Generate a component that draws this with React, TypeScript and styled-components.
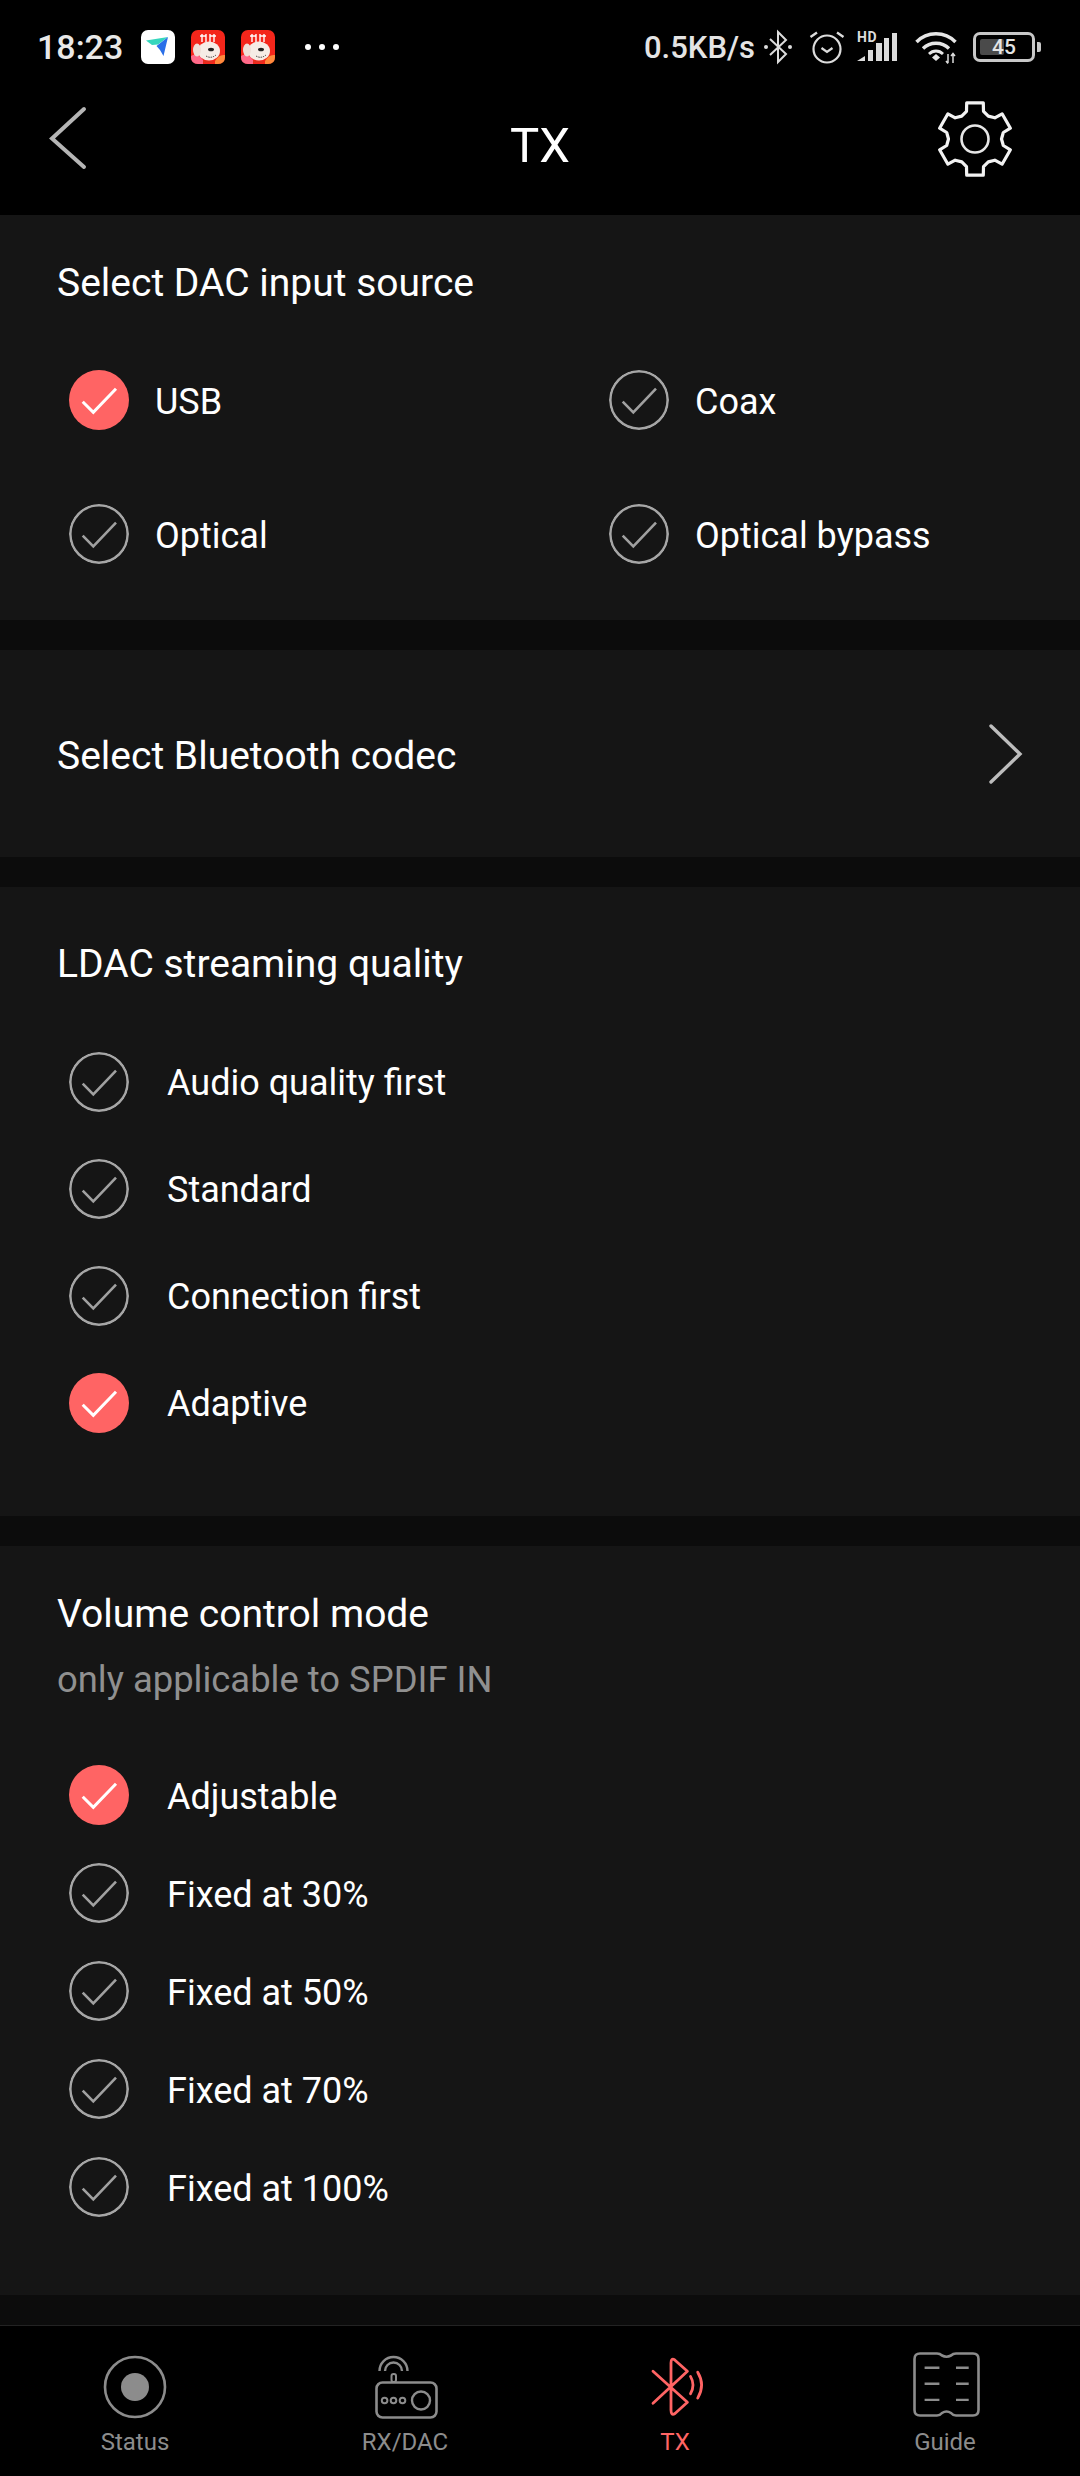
import React from "react";
import styled, { createGlobalStyle } from "styled-components";

const GlobalStyle = createGlobalStyle`
  html, body {
    margin: 0;
    padding: 0;
    background: #000;
  }
  * {
    box-sizing: border-box;
  }
`;

const ACCENT = "#ff6464";

function gearPath(cx: number, cy: number) {
  const rOut = 37;
  const rIn = 26.5;
  const pts: string[] = [];
  for (let i = 0; i < 6; i++) {
    const a = -90 + i * 60;
    const pt = (deg: number, r: number) => {
      const rad = (deg * Math.PI) / 180;
      return `${(cx + r * Math.cos(rad)).toFixed(1)} ${(cy + r * Math.sin(rad)).toFixed(1)}`;
    };
    pts.push(pt(a - 17, rOut - 8), pt(a - 13, rOut), pt(a + 13, rOut), pt(a + 17, rOut - 8), pt(a + 30, rIn));
  }
  return `M${pts.join("L")}Z`;
}

function PlaneApp() {
  return (
    <AppIcon viewBox="0 0 34 34">
      <rect width="34" height="34" rx="7" fill="#fff" />
      <path d="M5 10.5 27 7 17 14.5 11 15Z" fill="#35d6bd" />
      <path d="M27 7 22.5 26 19 20 15.5 16Z" fill="#2a6fe8" />
    </AppIcon>
  );
}

function DogApp() {
  return (
    <AppIcon viewBox="0 0 34 34">
      <rect width="34" height="34" rx="7" fill="#f4261b" />
      <path d="M0 26 Q6 22 12 30 L12 34 H7 Q0 34 0 27Z" fill="#ff6a8a" />
      <path d="M34 25 Q28 24 24 31 L24 34 H27 Q34 34 34 27Z" fill="#ff8a3c" />
      <path d="M11 4v8M15 4v8M19 4v8M23 4v8M9 6h6M19 6h6" stroke="#fff" strokeWidth="1.4" />
      <ellipse cx="18" cy="21" rx="11" ry="9.5" fill="#f6ece6" />
      <ellipse cx="6" cy="20" rx="4" ry="6.5" fill="#efe0d8" />
      <ellipse cx="20" cy="19.5" rx="3" ry="1.8" fill="#222" />
      <path d="M15 26q5 3 10-1" stroke="#333" strokeWidth="1" strokeDasharray="1.4 1" fill="none" />
      <rect x="12" y="31" width="10" height="1.4" fill="#d32" />
    </AppIcon>
  );
}

function Check({ selected }: { selected: boolean }) {
  return (
    <RadioCircle $selected={selected} viewBox="0 0 60 60">
      {!selected && <circle cx="30" cy="30" r="28.7" fill="none" stroke="#a6a6a6" strokeWidth="2.6" />}
      <path
        d="M13.7 31.7 24.3 42.3 47 18.7"
        fill="none"
        stroke={selected ? "#fff" : "#a0a0a0"}
        strokeWidth={selected ? 3 : 2.6}
      />
    </RadioCircle>
  );
}

function Option({ label, selected = false, wide = false }: { label: string; selected?: boolean; wide?: boolean }) {
  return (
    <OptionInner $wide={wide}>
      <Check selected={selected} />
      <OptionLabel>{label}</OptionLabel>
    </OptionInner>
  );
}

export default function App() {
  return (
    <Page>
      <GlobalStyle />
      <Top>
        <StatusBar>
          <StatusLeft>
            <Clock>18:23</Clock>
            <AppIcons>
              <PlaneApp />
              <DogApp />
              <DogApp />
            </AppIcons>
            <Dots>
              <i />
              <i />
              <i />
            </Dots>
          </StatusLeft>
          <StatusRight>
            <Speed>0.5KB/s</Speed>
            <StatusIcon $w={30} $gap={8} viewBox="0 0 30 34">
              <path d="M7 9 23 24 15 32V2L23 10 7 25" fill="none" stroke="#dcdcdc" strokeWidth="2" />
              <circle cx="3" cy="17" r="2" fill="#dcdcdc" />
              <circle cx="27" cy="17" r="2" fill="#dcdcdc" />
            </StatusIcon>
            <StatusIcon $w={36} $gap={16} viewBox="0 0 36 34">
              <circle cx="18" cy="19" r="13.5" fill="none" stroke="#dcdcdc" strokeWidth="2.2" />
              <path d="M12.5 18 18 22 23.5 18" fill="none" stroke="#dcdcdc" strokeWidth="2.2" />
              <path d="M1.5 7 8 2.5M34.5 7 28 2.5" stroke="#dcdcdc" strokeWidth="2.4" />
            </StatusIcon>
            <StatusIcon $w={42} $gap={12} viewBox="0 0 42 34">
              <path d="M0 31 8 26V31ZM11 20H16V31H11ZM19 13H25V31H19ZM27 8H32V31H27ZM35 3H40V31H35Z" fill="#dcdcdc" />
              <HdText x="0" y="12">HD</HdText>
            </StatusIcon>
            <StatusIcon $w={42} $gap={16} viewBox="0 0 42 34">
              <path d="M1.500 12C12 1 30 1 40.500 12M8 18.500C15 11.500 27 11.500 34 18.500" fill="none" stroke="#e6e6e6" strokeWidth="3.4" />
              <path d="M14 24C18 20 24 20 28 24" fill="none" stroke="#e6e6e6" strokeWidth="2.8" />
              <path d="M17 27.500 21 24 25 27.500 21 31Z" fill="#e6e6e6" />
              <path d="M33 24V33M31 31 33 33.500M38 33V24M36 26 38 23.500 40 26" fill="none" stroke="#dcdcdc" strokeWidth="1.5" />
            </StatusIcon>
            <BatteryWrap>
              <BatteryBody>
                <BatteryFill />
                <BatteryText>45</BatteryText>
              </BatteryBody>
              <BatteryTip />
            </BatteryWrap>
          </StatusRight>
        </StatusBar>
        <Header>
          <HeaderSlot>
            <svg width="44" height="66" viewBox="0 0 44 66">
              <path d="M36 3 4 32.500 36 61" fill="none" stroke="#b5b5b5" strokeWidth="4" strokeLinecap="round" />
            </svg>
          </HeaderSlot>
          <HeaderTitle>TX</HeaderTitle>
          <GearSlot>
            <svg width="80" height="80" viewBox="0 0 80 80">
              <path d={gearPath(40, 40)} fill="none" stroke="#f2f2f2" strokeWidth="3.2" strokeLinejoin="round" />
              <circle cx="40" cy="40" r="13.500" fill="none" stroke="#e6e6e6" strokeWidth="2.6" />
            </svg>
          </GearSlot>
        </Header>
      </Top>

      <Content>
        <SourceCard>
          <Title>Select DAC input source</Title>
          <SourceGrid>
            <Option label="USB" selected />
            <Option label="Coax" />
            <Option label="Optical" />
            <Option label="Optical bypass" />
          </SourceGrid>
        </SourceCard>

        <CodecCard>
          <CodecTitle>Select Bluetooth codec</CodecTitle>
          <svg width="36" height="62" viewBox="0 0 36 62">
            <path d="M3 3 32 31 3 59" fill="none" stroke="#bdbdbd" strokeWidth="3.4" strokeLinecap="round" />
          </svg>
        </CodecCard>

        <QualityCard>
          <Title>LDAC streaming quality</Title>
          <OptionList $rowHeight={107} $top={34}>
            <Option wide label="Audio quality first" />
            <Option wide label="Standard" />
            <Option wide label="Connection first" />
            <Option wide label="Adaptive" selected />
          </OptionList>
        </QualityCard>

        <VolumeCard>
          <Title>Volume control mode</Title>
          <Subtitle>only applicable to SPDIF IN</Subtitle>
          <OptionList $rowHeight={98} $top={36}>
            <Option wide label="Adjustable" selected />
            <Option wide label="Fixed at 30%" />
            <Option wide label="Fixed at 50%" />
            <Option wide label="Fixed at 70%" />
            <Option wide label="Fixed at 100%" />
          </OptionList>
        </VolumeCard>
      </Content>

      <BottomNav>
        <NavItem>
          <NavIcon viewBox="0 0 70 70">
            <circle cx="35" cy="35" r="30" fill="none" stroke="#8c8c8c" strokeWidth="2.6" />
            <circle cx="35" cy="35" r="14" fill="#8c8c8c" />
          </NavIcon>
          <NavLabel>Status</NavLabel>
        </NavItem>
        <NavItem>
          <NavIcon viewBox="0 0 70 70">
            <rect x="6.500" y="30.500" width="60" height="35" rx="6" fill="none" stroke="#8c8c8c" strokeWidth="2.6" />
            <path d="M9.500 19A14 14 0 0 1 37.500 19M15 19A8.500 8.500 0 0 1 32 19" fill="none" stroke="#8c8c8c" strokeWidth="2.4" />
            <rect x="21.500" y="22" width="4.500" height="8" rx="2" fill="none" stroke="#8c8c8c" strokeWidth="2" />
            <circle cx="14.600" cy="48.500" r="2.800" fill="none" stroke="#8c8c8c" strokeWidth="2" />
            <circle cx="23.500" cy="48.500" r="2.800" fill="none" stroke="#8c8c8c" strokeWidth="2" />
            <circle cx="32.500" cy="48.500" r="2.800" fill="none" stroke="#8c8c8c" strokeWidth="2" />
            <circle cx="51" cy="48.500" r="9" fill="none" stroke="#8c8c8c" strokeWidth="2.4" />
          </NavIcon>
          <NavLabel>RX/DAC</NavLabel>
        </NavItem>
        <NavItem>
          <NavIcon viewBox="0 0 70 70">
            <path
              d="M13 19.300 47.400 50.300 35 61.500Q31 64 31 58V11Q31 5 35 8.200L47.400 19.300 13 51.300"
              fill="none"
              stroke={ACCENT}
              strokeWidth="2.800"
              strokeLinecap="round"
              strokeLinejoin="round"
            />
            <path d="M50.500 24.400Q55.500 33 50.500 41.700M57.700 20.300Q65.500 33 57.700 46.100" fill="none" stroke={ACCENT} strokeWidth="2.800" strokeLinecap="round" />
          </NavIcon>
          <NavLabel $active>TX</NavLabel>
        </NavItem>
        <NavItem>
          <NavIcon viewBox="0 0 70 70">
            <path
              d="M10 1.500H27Q30 1.500 32 3.500Q36.500 6 41 3.500Q43 1.500 46 1.500H63Q68.500 1.500 68.500 7V58Q68.500 63.500 63 63.500H46Q43 63.500 41 61Q36.500 58 32 61Q30 63.500 27 63.500H10Q4.500 63.500 4.500 58V7Q4.500 1.500 10 1.500Z"
              fill="none"
              stroke="#8c8c8c"
              strokeWidth="2.600"
            />
            <path d="M14.600 15.800H29.400M46 15.800H58.700M14.600 31.700H29.400M46 31.700H58.700M14.600 47.900H29.400M46 47.900H58.700" stroke="#8c8c8c" strokeWidth="2.400" />
          </NavIcon>
          <NavLabel>Guide</NavLabel>
        </NavItem>
      </BottomNav>
    </Page>
  );
}

const Page = styled.div`
  width: 1080px;
  height: 2476px;
  display: flex;
  flex-direction: column;
  overflow: hidden;
  background: #0c0c0c;
  color: #fff;
  font-family: Roboto, "Liberation Sans", sans-serif;
`;

const Top = styled.div`
  height: 215px;
  background: #000;
  flex: none;
`;

const StatusBar = styled.div`
  height: 94px;
  display: flex;
  align-items: center;
  justify-content: space-between;
  padding: 0 39px 0 37px;
`;

const StatusLeft = styled.div`
  display: flex;
  align-items: center;
`;

const Clock = styled.span`
  font-size: 34px;
  font-weight: 500;
  color: #e8e8e8;
  width: 104px;
`;

const AppIcons = styled.div`
  display: flex;
  gap: 16px;
`;

const AppIcon = styled.svg`
  width: 34px;
  height: 34px;
  display: block;
`;

const Dots = styled.div`
  display: flex;
  gap: 8px;
  margin-left: 30px;

  i {
    display: block;
    width: 6px;
    height: 6px;
    border-radius: 50%;
    background: #fff;
  }
`;

const StatusRight = styled.div`
  display: flex;
  align-items: center;
`;

const Speed = styled.span`
  font-size: 31px;
  font-weight: 500;
  color: #e4e4e4;
`;

const StatusIcon = styled.svg<{ $w: number; $gap: number }>`
  width: ${(p) => p.$w}px;
  height: 34px;
  margin-left: ${(p) => p.$gap}px;
  display: block;
  overflow: visible;
`;

const HdText = styled.text`
  font-size: 14px;
  font-weight: 700;
  letter-spacing: 0.5px;
  fill: #dcdcdc;
`;

const BatteryWrap = styled.div`
  display: flex;
  align-items: center;
  gap: 2px;
  margin-left: 16px;
`;

const BatteryBody = styled.div`
  position: relative;
  width: 62px;
  height: 30px;
  border: 3px solid #c8c8c8;
  border-radius: 7px;
  display: flex;
  align-items: center;
  justify-content: center;
`;

const BatteryFill = styled.div`
  position: absolute;
  left: 4px;
  top: 4px;
  bottom: 4px;
  width: 24px;
  border-radius: 2px;
  background: #4a4a4a;
`;

const BatteryText = styled.span`
  position: relative;
  font-size: 21px;
  font-weight: 500;
  color: #e4e4e4;
  line-height: 1;
`;

const BatteryTip = styled.div`
  width: 4px;
  height: 10px;
  border-radius: 0 2px 2px 0;
  background: #c8c8c8;
`;

const Header = styled.div`
  height: 121px;
  display: grid;
  grid-template-columns: 1fr auto 1fr;
  align-items: center;
  padding: 0 48px 32px;
`;

const HeaderSlot = styled.div`
  display: flex;
`;

const GearSlot = styled.div`
  display: flex;
  justify-content: flex-end;
  margin-right: 17px;
`;

const HeaderTitle = styled.div`
  font-size: 49px;
  line-height: 60px;
  padding-top: 14px;
  color: #fff;
`;

const Content = styled.div`
  flex: 1;
  display: flex;
  flex-direction: column;
  gap: 30px;
`;

const Card = styled.section`
  background: #151515;
  padding: 0 0 0 57px;
`;

const SourceCard = styled(Card)`
  height: 405px;
  padding-top: 38px;
`;

const CodecCard = styled(Card)`
  height: 207px;
  display: flex;
  align-items: center;
  justify-content: space-between;
  padding-right: 56px;
`;

const QualityCard = styled(Card)`
  height: 629px;
  padding-top: 47px;
`;

const VolumeCard = styled(Card)`
  height: 749px;
  padding-top: 38px;
`;

const Title = styled.h2`
  margin: 0;
  font-size: 39px;
  font-weight: 400;
  line-height: 60px;
  color: #fff;
`;

const CodecTitle = styled(Title)`
  padding-top: 4px;
`;

const Subtitle = styled.div`
  margin-top: 6px;
  font-size: 36.4px;
  line-height: 60px;
  color: #909090;
`;

const SourceGrid = styled.div`
  display: grid;
  grid-template-columns: 540px 1fr;
  grid-auto-rows: 134px;
  margin-top: 20px;
  margin-left: 12px;
`;

const OptionList = styled.div<{ $rowHeight: number; $top: number }>`
  display: grid;
  grid-auto-rows: ${(p) => p.$rowHeight}px;
  margin-top: ${(p) => p.$top}px;
  margin-left: 12px;
`;

const OptionInner = styled.div<{ $wide: boolean }>`
  display: flex;
  align-items: center;
  gap: ${(p) => (p.$wide ? 38 : 26)}px;
`;

const RadioCircle = styled.svg<{ $selected: boolean }>`
  width: 60px;
  height: 60px;
  flex: none;
  border-radius: 50%;
  background: ${(p) => (p.$selected ? ACCENT : "transparent")};
`;

const OptionLabel = styled.span`
  font-size: 36px;
  padding-top: 3px;
  color: #fff;
`;

const BottomNav = styled.nav`
  height: 151px;
  flex: none;
  background: #000;
  border-top: 1px solid #232323;
  display: grid;
  grid-template-columns: repeat(4, 1fr);
`;

const NavItem = styled.div`
  display: flex;
  flex-direction: column;
  align-items: center;
  padding-top: 26px;
`;

const NavIcon = styled.svg`
  width: 70px;
  height: 70px;
  display: block;
  overflow: visible;
`;

const NavLabel = styled.span<{ $active?: boolean }>`
  margin-top: 6px;
  font-size: 24px;
  line-height: 28px;
  color: ${(p) => (p.$active ? ACCENT : "#8c8c8c")};
`;
